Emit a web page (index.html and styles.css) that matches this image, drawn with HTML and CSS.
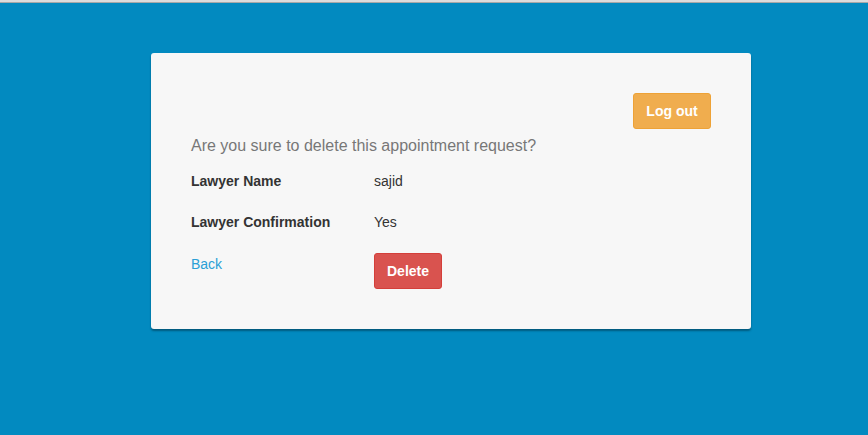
FILE: index.html
```html
<!DOCTYPE html>
<html>
<head>
<meta charset="utf-8">
<link rel="stylesheet" href="styles.css">
</head>
<body>
<div class="topline"></div>
<main class="page">
  <section class="card">
    <div class="toolbar">
      <button class="btn btn-warning">Log out</button>
    </div>
    <h4 class="question">Are you sure to delete this appointment request?</h4>
    <div class="details">
      <div class="label">Lawyer Name</div>
      <div class="value">sajid</div>
      <div class="label">Lawyer Confirmation</div>
      <div class="value">Yes</div>
      <div class="label action"><a class="link" href="#">Back</a></div>
      <div class="value action"><button class="btn btn-danger">Delete</button></div>
    </div>
  </section>
</main>
</body>
</html>
```
FILE: styles.css
```css
html, body {
  margin: 0;
  padding: 0;
  height: 100%;
}
body {
  background: #028ac0;
  font-family: "Liberation Sans", Arial, sans-serif;
  font-size: 14px;
  color: #333;
}
.topline {
  height: 3px;
  background: #dcdcdc;
  border-bottom: 1px solid #a8a8a8;
  box-sizing: border-box;
}
.page {
  padding: 50px 0 0 151px;
}
.card {
  width: 600px;
  box-sizing: border-box;
  background: #f7f7f7;
  border-radius: 3px;
  box-shadow: 0 2px 2px rgba(0, 0, 0, 0.35);
  padding: 40px 40px 40px 40px;
}
.toolbar {
  display: flex;
  justify-content: flex-end;
}
.btn {
  display: block;
  font-family: "Liberation Sans", Arial, sans-serif;
  font-weight: bold;
  font-size: 14px;
  line-height: 16px;
  color: #fff;
  height: 36px;
  padding: 0;
  border-radius: 3px;
  border: 1px solid transparent;
  cursor: pointer;
}
.btn-warning {
  background: #f0ad4e;
  border-color: #eea236;
  width: 78px;
}
.btn-danger {
  background: #d9534f;
  border-color: #d43f3a;
  width: 68px;
}
.question {
  margin: 6px 0 0 0;
  font-size: 16px;
  font-weight: normal;
  line-height: 22px;
  color: #777;
}
.details {
  display: grid;
  grid-template-columns: 183px auto;
  grid-template-rows: 41px 41px auto;
  align-items: center;
  margin-top: 3px;
}
.label {
  font-weight: bold;
  color: #333;
}
.value {
  color: #333;
}
.action {
  align-self: start;
}
.label.action {
  padding-top: 14px;
  line-height: 16px;
}
.value.action {
  padding-top: 11px;
}
.link {
  color: #2a9fd6;
  text-decoration: none;
  font-weight: normal;
}
```
